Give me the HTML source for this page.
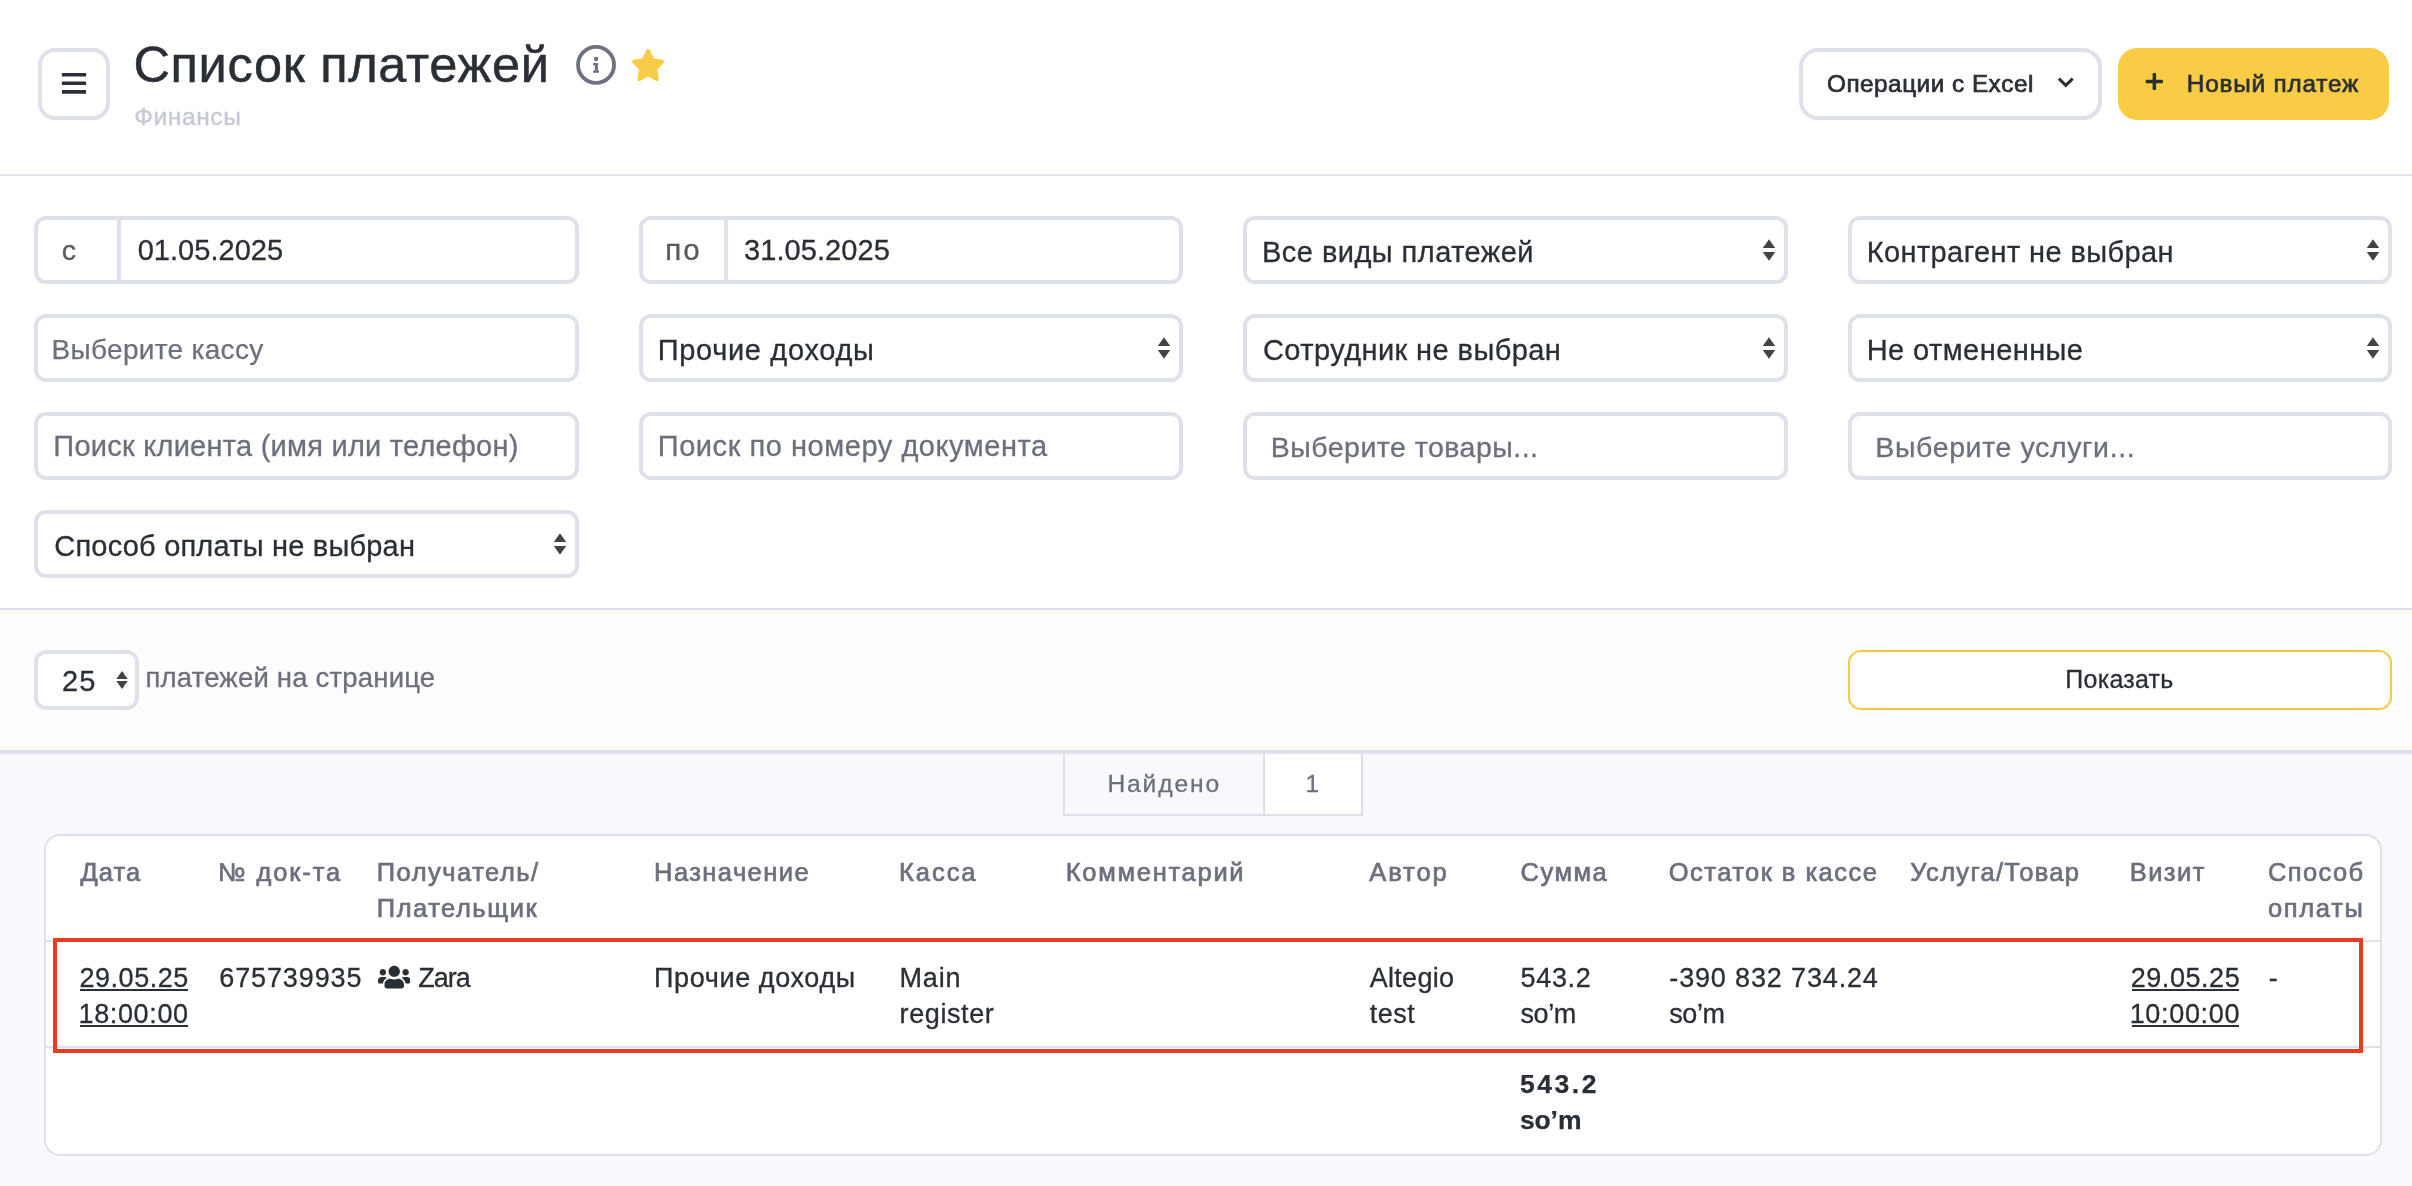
<!DOCTYPE html>
<html lang="ru"><head><meta charset="utf-8"><title>Список платежей</title>
<style>
html,body{margin:0;padding:0}
body{width:2412px;height:1186px;position:relative;overflow:hidden;background:#fff;font-family:"Liberation Sans",sans-serif}
.t{position:absolute;white-space:nowrap;line-height:1;font-family:"Liberation Sans",sans-serif}
#w{position:absolute;left:0;top:0;width:2412px;height:1186px;will-change:transform}
</style></head><body><div id="w">
<div style="position:absolute;left:0px;top:610px;width:2412px;height:140px;background:#fdfdfd"></div>
<div style="position:absolute;left:0px;top:754px;width:2412px;height:432px;background:#f8f9fc"></div>
<div style="position:absolute;left:0px;top:174px;width:2412px;height:2px;background:#e1e3ec"></div>
<div style="position:absolute;left:0px;top:608px;width:2412px;height:2px;background:#dddfe8"></div>
<div style="position:absolute;left:0px;top:750px;width:2412px;height:4px;background:#e0e2eb"></div>
<div style="position:absolute;box-sizing:border-box;left:38px;top:48px;width:72px;height:72px;border:4px solid #dfe1ea;border-radius:17px;background:#fff"></div>
<svg style="position:absolute;left:60px;top:70px" width="28" height="28" viewBox="0 0 28 28"><rect x="1.9" y="2.9" width="24.2" height="3.6" rx="0.6" fill="#2a2f35"/><rect x="1.9" y="11.5" width="24.2" height="3.6" rx="0.6" fill="#2a2f35"/><rect x="1.9" y="20.1" width="24.2" height="3.7" rx="0.6" fill="#2a2f35"/></svg>
<svg style="position:absolute;left:574px;top:43px" width="44" height="44" viewBox="0 0 44 44"><circle cx="22.05" cy="21.9" r="18" fill="none" stroke="#6d7180" stroke-width="3.8"/><circle cx="22.1" cy="16" r="2.2" fill="#6d7180"/><path d="M19.1 20.1 H23.9 V27.4 H25 V29.8 H19.1 V27.4 H20.8 V22.3 H19.1 Z" fill="#6d7180"/></svg>
<svg style="position:absolute;left:630px;top:47px" width="38" height="38" viewBox="0 0 38 38"><g transform="translate(0.842,1.900) scale(0.06008,0.06289)"><path fill="#f7cc46" d="M259.3 17.8L194 150.2 47.9 171.5c-26.2 3.8-36.7 36.1-17.7 54.6l105.7 103-25 145.5c-4.5 26.3 23.2 46 46.400 33.700L288 439.600l130.700 68.700c23.200 12.200 50.900-7.400 46.400-33.700l-25-145.500 105.700-103c19-18.500 8.500-50.800-17.700-54.600L382 150.200 316.700 17.800c-11.700-23.600-45.600-23.900-57.400 0z"/></g></svg>
<div style="position:absolute;box-sizing:border-box;left:1799px;top:48px;width:303px;height:72px;border:4px solid #dfe1ea;border-radius:19px;background:#fff"></div>
<svg style="position:absolute;left:2054px;top:72px" width="24" height="20" viewBox="0 0 24 20"><polyline points="4.9,6.6 11.8,13.4 18.7,6.6" fill="none" stroke="#2a2f35" stroke-width="3" stroke-linejoin="miter"/></svg>
<div style="position:absolute;left:2118px;top:48px;width:270.5px;height:72px;background:#f8cd45;border-radius:19px"></div>
<svg style="position:absolute;left:2142px;top:69px" width="26" height="26" viewBox="0 0 26 26"><rect x="3.7" y="10.75" width="17.3" height="3.5" rx="0.8" fill="#2a2f35"/><rect x="10.6" y="4.1" width="3.5" height="16.8" rx="0.8" fill="#2a2f35"/></svg>
<div style="position:absolute;box-sizing:border-box;left:34px;top:216px;width:545px;height:68px;border:4px solid #dfe1ea;border-radius:12px;background:#fff"></div>
<div style="position:absolute;box-sizing:border-box;left:639px;top:216px;width:544px;height:68px;border:4px solid #dfe1ea;border-radius:12px;background:#fff"></div>
<div style="position:absolute;box-sizing:border-box;left:1243px;top:216px;width:545px;height:68px;border:4px solid #dfe1ea;border-radius:12px;background:#fff"></div>
<div style="position:absolute;box-sizing:border-box;left:1848px;top:216px;width:544px;height:68px;border:4px solid #dfe1ea;border-radius:12px;background:#fff"></div>
<div style="position:absolute;box-sizing:border-box;left:34px;top:314px;width:545px;height:68px;border:4px solid #dfe1ea;border-radius:12px;background:#fff"></div>
<div style="position:absolute;box-sizing:border-box;left:639px;top:314px;width:544px;height:68px;border:4px solid #dfe1ea;border-radius:12px;background:#fff"></div>
<div style="position:absolute;box-sizing:border-box;left:1243px;top:314px;width:545px;height:68px;border:4px solid #dfe1ea;border-radius:12px;background:#fff"></div>
<div style="position:absolute;box-sizing:border-box;left:1848px;top:314px;width:544px;height:68px;border:4px solid #dfe1ea;border-radius:12px;background:#fff"></div>
<div style="position:absolute;box-sizing:border-box;left:34px;top:412px;width:545px;height:68px;border:4px solid #dfe1ea;border-radius:12px;background:#fff"></div>
<div style="position:absolute;box-sizing:border-box;left:639px;top:412px;width:544px;height:68px;border:4px solid #dfe1ea;border-radius:12px;background:#fff"></div>
<div style="position:absolute;box-sizing:border-box;left:1243px;top:412px;width:545px;height:68px;border:4px solid #dfe1ea;border-radius:12px;background:#fff"></div>
<div style="position:absolute;box-sizing:border-box;left:1848px;top:412px;width:544px;height:68px;border:4px solid #dfe1ea;border-radius:12px;background:#fff"></div>
<div style="position:absolute;box-sizing:border-box;left:34px;top:510px;width:545px;height:68px;border:4px solid #dfe1ea;border-radius:12px;background:#fff"></div>
<div style="position:absolute;left:117px;top:220px;width:4px;height:60px;background:#dfe1ea"></div>
<div style="position:absolute;left:724px;top:220px;width:4px;height:60px;background:#dfe1ea"></div>
<svg style="position:absolute;left:1759px;top:234.9px" width="20" height="30" viewBox="0 0 20 30"><polygon points="10.00,4.20 16.20,12.90 3.80,12.90" fill="#434343"/><polygon points="3.80,17.10 16.20,17.10 10.00,25.80" fill="#434343"/></svg>
<svg style="position:absolute;left:2363px;top:234.9px" width="20" height="30" viewBox="0 0 20 30"><polygon points="10.00,4.20 16.20,12.90 3.80,12.90" fill="#434343"/><polygon points="3.80,17.10 16.20,17.10 10.00,25.80" fill="#434343"/></svg>
<svg style="position:absolute;left:1154px;top:332.9px" width="20" height="30" viewBox="0 0 20 30"><polygon points="10.00,4.20 16.20,12.90 3.80,12.90" fill="#434343"/><polygon points="3.80,17.10 16.20,17.10 10.00,25.80" fill="#434343"/></svg>
<svg style="position:absolute;left:1759px;top:332.9px" width="20" height="30" viewBox="0 0 20 30"><polygon points="10.00,4.20 16.20,12.90 3.80,12.90" fill="#434343"/><polygon points="3.80,17.10 16.20,17.10 10.00,25.80" fill="#434343"/></svg>
<svg style="position:absolute;left:2363px;top:332.9px" width="20" height="30" viewBox="0 0 20 30"><polygon points="10.00,4.20 16.20,12.90 3.80,12.90" fill="#434343"/><polygon points="3.80,17.10 16.20,17.10 10.00,25.80" fill="#434343"/></svg>
<svg style="position:absolute;left:550px;top:528.9px" width="20" height="30" viewBox="0 0 20 30"><polygon points="10.00,4.20 16.20,12.90 3.80,12.90" fill="#434343"/><polygon points="3.80,17.10 16.20,17.10 10.00,25.80" fill="#434343"/></svg>
<div style="position:absolute;box-sizing:border-box;left:34px;top:650px;width:105px;height:60px;border:4px solid #dfe1ea;border-radius:12px;background:#fff"></div>
<svg style="position:absolute;left:112.1px;top:665.2px" width="20" height="30" viewBox="0 0 20 30"><polygon points="10.00,6.10 15.70,13.90 4.30,13.90" fill="#434343"/><polygon points="4.30,16.10 15.70,16.10 10.00,23.90" fill="#434343"/></svg>
<div style="position:absolute;box-sizing:border-box;left:1848px;top:650px;width:544px;height:60px;border:2px solid #f6c840;border-radius:13px;background:#fff"></div>
<div style="position:absolute;left:1063px;top:754px;width:300px;height:62px;background:#dcdfe6"></div>
<div style="position:absolute;left:1065px;top:754px;width:198px;height:60px;background:#f8f9fc"></div>
<div style="position:absolute;left:1265px;top:754px;width:96px;height:60px;background:#fff"></div>
<div style="position:absolute;box-sizing:border-box;left:44px;top:834px;width:2338px;height:322px;border:2px solid #dfe1ea;border-radius:16px;background:#fff"></div>
<div style="position:absolute;left:46px;top:940px;width:2334px;height:2px;background:#e1e3eb"></div>
<div style="position:absolute;left:46px;top:1046px;width:2334px;height:2px;background:#dfe1e9"></div>
<svg style="position:absolute;left:377.9px;top:964.17px" width="32.50" height="26.00" viewBox="0 0 640 512"><path fill="#2a2f35" d="M96 224c35.3 0 64-28.7 64-64s-28.7-64-64-64-64 28.7-64 64 28.7 64 64 64zm448 0c35.3 0 64-28.7 64-64s-28.7-64-64-64-64 28.7-64 64 28.7 64 64 64zm32 32h-64c-17.6 0-33.5 7.1-45.1 18.6 40.3 22.1 68.9 62 75.1 109.4h66c17.7 0 32-14.3 32-32v-32c0-35.3-28.7-64-64-64zm-256 0c61.9 0 112-50.1 112-112S381.900 32 320 32 208 82.100 208 144s50.100 112 112 112zm76.800 32h-8.300c-20.800 10-43.900 16-68.500 16s-47.600-6-68.500-16h-8.300C179.600 288 128 339.600 128 403.200V432c0 26.500 21.500 48 48 48h288c26.500 0 48-21.500 48-48v-28.800c0-63.600-51.600-115.200-115.200-115.200zm-223.700-13.400C161.500 263.100 145.600 256 128 256H64c-35.300 0-64 28.700-64 64v32c0 17.700 14.300 32 32 32h65.900c6.300-47.400 34.900-87.300 75.200-109.400z"/></svg>
<div style="position:absolute;left:80.3px;top:989.4px;width:107.3px;height:1.7999999999999545px;background:#2a2f35"></div>
<div style="position:absolute;left:80.3px;top:1025.1px;width:107.3px;height:1.7999999999999545px;background:#2a2f35"></div>
<div style="position:absolute;left:2131.5px;top:989.4px;width:107.5px;height:1.7999999999999545px;background:#2a2f35"></div>
<div style="position:absolute;left:2131.5px;top:1025.1px;width:107.5px;height:1.7999999999999545px;background:#2a2f35"></div>
<span class="t" style="left:133.40px;top:39.90px;font-size:50.5px;color:#2a2f35;letter-spacing:0.679px;-webkit-text-stroke:0.5px #2a2f35;">Список платежей</span>
<span class="t" style="left:134.20px;top:104.50px;font-size:24.5px;color:#c5c9d5;letter-spacing:0.633px;-webkit-text-stroke:0.4px #c5c9d5;">Финансы</span>
<span class="t" style="left:1827.00px;top:72.10px;font-size:24.3px;color:#2a2f35;letter-spacing:0.507px;-webkit-text-stroke:0.7px #2a2f35;">Операции с Excel</span>
<span class="t" style="left:2186.80px;top:72.10px;font-size:24.3px;color:#2a2f35;letter-spacing:0.818px;-webkit-text-stroke:0.7px #2a2f35;">Новый платеж</span>
<span class="t" style="left:61.80px;top:235.80px;font-size:28.5px;color:#595a5e;letter-spacing:0.000px;-webkit-text-stroke:0.3px #595a5e;">с</span>
<span class="t" style="left:137.70px;top:235.60px;font-size:29px;color:#2a2f35;letter-spacing:0.033px;-webkit-text-stroke:0.3px #2a2f35;">01.05.2025</span>
<span class="t" style="left:665.30px;top:234.80px;font-size:29.5px;color:#595a5e;letter-spacing:2.100px;-webkit-text-stroke:0.3px #595a5e;">по</span>
<span class="t" style="left:744.10px;top:235.60px;font-size:29px;color:#2a2f35;letter-spacing:0.067px;-webkit-text-stroke:0.3px #2a2f35;">31.05.2025</span>
<span class="t" style="left:1262.00px;top:238.20px;font-size:29px;color:#2a2f35;letter-spacing:0.463px;-webkit-text-stroke:0.3px #2a2f35;">Все виды платежей</span>
<span class="t" style="left:1866.70px;top:238.20px;font-size:29px;color:#2a2f35;letter-spacing:0.395px;-webkit-text-stroke:0.3px #2a2f35;">Контрагент не выбран</span>
<span class="t" style="left:51.60px;top:336.00px;font-size:28px;color:#6c6f7c;letter-spacing:0.308px;-webkit-text-stroke:0.25px #6c6f7c;">Выберите кассу</span>
<span class="t" style="left:657.80px;top:336.00px;font-size:29px;color:#2a2f35;letter-spacing:0.658px;-webkit-text-stroke:0.3px #2a2f35;">Прочие доходы</span>
<span class="t" style="left:1263.00px;top:336.00px;font-size:29px;color:#2a2f35;letter-spacing:0.417px;-webkit-text-stroke:0.3px #2a2f35;">Сотрудник не выбран</span>
<span class="t" style="left:1866.70px;top:336.00px;font-size:29px;color:#2a2f35;letter-spacing:0.433px;-webkit-text-stroke:0.3px #2a2f35;">Не отмененные</span>
<span class="t" style="left:53.30px;top:431.60px;font-size:29px;color:#6c6f7c;letter-spacing:0.250px;-webkit-text-stroke:0.3px #6c6f7c;">Поиск клиента (имя или телефон)</span>
<span class="t" style="left:657.80px;top:431.60px;font-size:29px;color:#6c6f7c;letter-spacing:0.546px;-webkit-text-stroke:0.3px #6c6f7c;">Поиск по номеру документа</span>
<span class="t" style="left:1270.80px;top:432.70px;font-size:28.5px;color:#6c6f7c;letter-spacing:0.482px;-webkit-text-stroke:0.3px #6c6f7c;">Выберите товары...</span>
<span class="t" style="left:1875.30px;top:432.70px;font-size:28.5px;color:#6c6f7c;letter-spacing:0.624px;-webkit-text-stroke:0.3px #6c6f7c;">Выберите услуги...</span>
<span class="t" style="left:54.30px;top:532.20px;font-size:29px;color:#2a2f35;letter-spacing:0.205px;-webkit-text-stroke:0.3px #2a2f35;">Способ оплаты не выбран</span>
<span class="t" style="left:62.10px;top:666.50px;font-size:29px;color:#2a2f35;letter-spacing:1.100px;-webkit-text-stroke:0.3px #2a2f35;">25</span>
<span class="t" style="left:145.50px;top:664.00px;font-size:27.5px;color:#6c6f7c;letter-spacing:0.195px;-webkit-text-stroke:0.3px #6c6f7c;">платежей на странице</span>
<span class="t" style="left:2065.30px;top:666.70px;font-size:25px;color:#2a2f35;letter-spacing:0.243px;-webkit-text-stroke:0.3px #2a2f35;">Показать</span>
<span class="t" style="left:1107.40px;top:772.30px;font-size:24.6px;color:#6c6f7c;letter-spacing:1.883px;-webkit-text-stroke:0.3px #6c6f7c;">Найдено</span>
<span class="t" style="left:1305.60px;top:772.30px;font-size:24.6px;color:#6c6f7c;letter-spacing:0.000px;-webkit-text-stroke:0.3px #6c6f7c;">1</span>
<span class="t" style="left:80.50px;top:859.80px;font-size:25.5px;color:#6c6f7c;letter-spacing:1.067px;-webkit-text-stroke:0.7px #6c6f7c;">Дата</span>
<span class="t" style="left:218.30px;top:859.80px;font-size:25.5px;color:#6c6f7c;letter-spacing:1.871px;-webkit-text-stroke:0.7px #6c6f7c;">№ док-та</span>
<span class="t" style="left:376.80px;top:859.80px;font-size:25.5px;color:#6c6f7c;letter-spacing:1.490px;-webkit-text-stroke:0.7px #6c6f7c;">Получатель/</span>
<span class="t" style="left:376.80px;top:895.80px;font-size:25.5px;color:#6c6f7c;letter-spacing:1.522px;-webkit-text-stroke:0.7px #6c6f7c;">Плательщик</span>
<span class="t" style="left:654.10px;top:859.80px;font-size:25.5px;color:#6c6f7c;letter-spacing:1.422px;-webkit-text-stroke:0.7px #6c6f7c;">Назначение</span>
<span class="t" style="left:899.10px;top:859.80px;font-size:25.5px;color:#6c6f7c;letter-spacing:1.925px;-webkit-text-stroke:0.7px #6c6f7c;">Касса</span>
<span class="t" style="left:1065.80px;top:859.80px;font-size:25.5px;color:#6c6f7c;letter-spacing:1.720px;-webkit-text-stroke:0.7px #6c6f7c;">Комментарий</span>
<span class="t" style="left:1369.30px;top:859.80px;font-size:25.5px;color:#6c6f7c;letter-spacing:1.900px;-webkit-text-stroke:0.7px #6c6f7c;">Автор</span>
<span class="t" style="left:1520.50px;top:859.80px;font-size:25.5px;color:#6c6f7c;letter-spacing:1.525px;-webkit-text-stroke:0.7px #6c6f7c;">Сумма</span>
<span class="t" style="left:1668.80px;top:859.80px;font-size:25.5px;color:#6c6f7c;letter-spacing:1.457px;-webkit-text-stroke:0.7px #6c6f7c;">Остаток в кассе</span>
<span class="t" style="left:1910.30px;top:859.80px;font-size:25.5px;color:#6c6f7c;letter-spacing:1.309px;-webkit-text-stroke:0.7px #6c6f7c;">Услуга/Товар</span>
<span class="t" style="left:2129.70px;top:859.80px;font-size:25.5px;color:#6c6f7c;letter-spacing:1.450px;-webkit-text-stroke:0.7px #6c6f7c;">Визит</span>
<span class="t" style="left:2268.00px;top:859.80px;font-size:25.5px;color:#6c6f7c;letter-spacing:1.400px;-webkit-text-stroke:0.7px #6c6f7c;">Способ</span>
<span class="t" style="left:2268.00px;top:895.80px;font-size:25.5px;color:#6c6f7c;letter-spacing:1.660px;-webkit-text-stroke:0.7px #6c6f7c;">оплаты</span>
<span class="t" style="left:79.50px;top:964.70px;font-size:27px;color:#2a2f35;letter-spacing:0.529px;-webkit-text-stroke:0.3px #2a2f35;">29.05.25</span>
<span class="t" style="left:78.50px;top:1000.70px;font-size:27px;color:#2a2f35;letter-spacing:0.643px;-webkit-text-stroke:0.3px #2a2f35;">18:00:00</span>
<span class="t" style="left:219.30px;top:964.70px;font-size:27px;color:#2a2f35;letter-spacing:0.875px;-webkit-text-stroke:0.3px #2a2f35;">675739935</span>
<span class="t" style="left:418.20px;top:964.70px;font-size:27px;color:#2a2f35;letter-spacing:-0.967px;-webkit-text-stroke:0.3px #2a2f35;">Zara</span>
<span class="t" style="left:654.10px;top:964.70px;font-size:27px;color:#2a2f35;letter-spacing:0.608px;-webkit-text-stroke:0.3px #2a2f35;">Прочие доходы</span>
<span class="t" style="left:899.60px;top:964.70px;font-size:27px;color:#2a2f35;letter-spacing:0.767px;-webkit-text-stroke:0.3px #2a2f35;">Main</span>
<span class="t" style="left:899.60px;top:1000.70px;font-size:27px;color:#2a2f35;letter-spacing:0.586px;-webkit-text-stroke:0.3px #2a2f35;">register</span>
<span class="t" style="left:1369.80px;top:964.70px;font-size:27px;color:#2a2f35;letter-spacing:0.267px;-webkit-text-stroke:0.3px #2a2f35;">Altegio</span>
<span class="t" style="left:1369.80px;top:1000.70px;font-size:27px;color:#2a2f35;letter-spacing:0.500px;-webkit-text-stroke:0.3px #2a2f35;">test</span>
<span class="t" style="left:1520.50px;top:964.70px;font-size:27px;color:#2a2f35;letter-spacing:0.675px;-webkit-text-stroke:0.3px #2a2f35;">543.2</span>
<span class="t" style="left:1520.50px;top:1000.70px;font-size:27px;color:#2a2f35;letter-spacing:-0.400px;-webkit-text-stroke:0.3px #2a2f35;">so’m</span>
<span class="t" style="left:1669.30px;top:964.70px;font-size:27px;color:#2a2f35;letter-spacing:0.850px;-webkit-text-stroke:0.3px #2a2f35;">-390 832 734.24</span>
<span class="t" style="left:1669.30px;top:1000.70px;font-size:27px;color:#2a2f35;letter-spacing:-0.433px;-webkit-text-stroke:0.3px #2a2f35;">so’m</span>
<span class="t" style="left:2130.70px;top:964.70px;font-size:27px;color:#2a2f35;letter-spacing:0.557px;-webkit-text-stroke:0.3px #2a2f35;">29.05.25</span>
<span class="t" style="left:2129.70px;top:1000.70px;font-size:27px;color:#2a2f35;letter-spacing:0.671px;-webkit-text-stroke:0.3px #2a2f35;">10:00:00</span>
<span class="t" style="left:2268.70px;top:964.70px;font-size:27px;color:#2a2f35;letter-spacing:0.000px;-webkit-text-stroke:0.3px #2a2f35;">-</span>
<span class="t" style="left:1519.90px;top:1071.00px;font-size:26.5px;color:#2a2f35;letter-spacing:2.550px;font-weight:700;-webkit-text-stroke:0.25px #2a2f35;">543.2</span>
<span class="t" style="left:1519.90px;top:1106.60px;font-size:26.5px;color:#2a2f35;letter-spacing:-0.100px;font-weight:700;-webkit-text-stroke:0.25px #2a2f35;">so’m</span>
<div style="position:absolute;box-sizing:border-box;left:53px;top:938px;width:2310px;height:115px;border:4px solid #e83c22"></div>
</div></body></html>
